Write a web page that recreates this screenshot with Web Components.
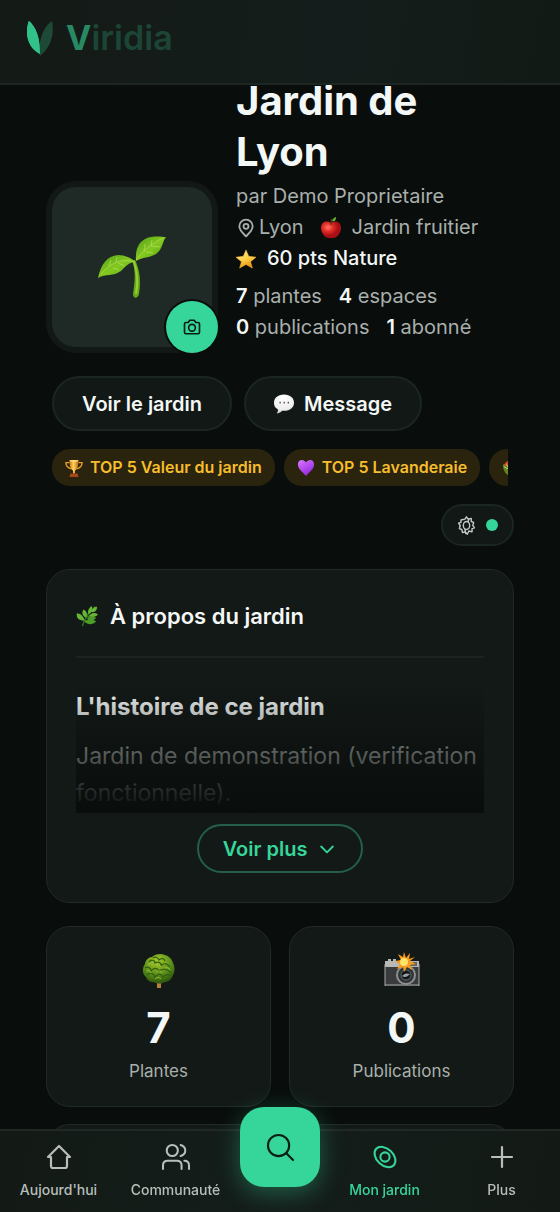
<!DOCTYPE html>
<html lang="fr">
<head>
<meta charset="utf-8">
<meta name="viewport" content="width=device-width, initial-scale=1">
<title>Viridia - Jardin de Lyon</title>
<style>
  :root {
    --bg: #090d0c;
    --surface: #131916;
    --line: #212a26;
    --text: #f3f7f5;
    --muted: #a9b0ac;
    --accent: #36d69b;
    --gold: #f6bd2c;
    --ink: #0b1e16;
  }
  body {
    margin: 0;
    background: var(--bg);
    color: var(--text);
    font-family: Inter, "Liberation Sans", sans-serif;
  }
</style>
</head>
<body>
<garden-app></garden-app>

<script>
const icons = {
  leaf: `<svg viewBox="0 0 28 36"><path d="M14 34C6 30 1 22 1 12 1 7 2 3 3 1c7 6 11 17 11 33Z" fill="#31c28a"/><path d="M14 36c-1-5-1-9 0-14C16 12 20 5 26 1c3 14-2 27-12 35Z" fill="#1d4936"/><path d="M14 34C6 30 1 22 1 12 1 7 2 3 3 1c7 6 11 17 11 33Z" fill="#31c28a"/></svg>`,
  sprout: `<svg viewBox="0 0 70 64"><defs><linearGradient id="a" x1="0" y1="0" x2="1" y2="1"><stop offset="0" stop-color="#4f9c18"/><stop offset=".5" stop-color="#83c91f"/><stop offset="1" stop-color="#4c9b12"/></linearGradient></defs><path d="M38 25c5 10 6 21 4 34-1 5-6 5-6 0 2-13 3-23-1-34Z" fill="#67aa19"/><path d="M37 27c4 12 4 21 2 32" fill="none" stroke="#94cf30" stroke-width="2"/><path d="M1 43C4 29 10 21 21 20c7 0 13 3 18 7-7 0-10 4-15 9-8 6-15 2-23 7Z" fill="url(#a)"/><path d="M39 26C38 12 43 4 54 2c7-1 11 0 15 0-4 5-3 12-10 17-7 4-13 3-20 7Z" fill="url(#a)"/><path d="M4 39c10-11 20-16 34-12M39 25C46 16 54 9 66 3M12 31l2-6m5 2 1-5m-4 11 6 2m-1-7 7 3M47 17l1-8m6 2 1-6m-6 12 7 1m-2-7 9 1" fill="none" stroke="#b1db58" stroke-width=".8"/></svg>`,
  camera: `<svg viewBox="0 0 24 24" class="stroke"><path d="M2 8c0-1 1-2 2-2h3l2-3h6l2 3h3c1 0 2 1 2 2v11c0 1-1 2-2 2H4c-1 0-2-1-2-2Z"/><circle cx="12" cy="13" r="4.500"/></svg>`,
  pin: `<svg viewBox="0 0 24 24" class="stroke"><path d="M20 10c0 5-5 9-8 12-3-3-8-7-8-12a8 8 0 0 1 16 0Z"/><circle cx="12" cy="10" r="3"/></svg>`,
  apple: `<svg viewBox="0 0 20 22"><defs><radialGradient id="a" cx=".35" cy=".35"><stop offset="0" stop-color="#ff7765"/><stop offset=".5" stop-color="#e52e28"/><stop offset="1" stop-color="#a90f14"/></radialGradient></defs><path d="M10 6c5-3 10-1 10 5 0 5-4 10-8 10H8c-4 0-8-5-8-10 0-6 5-8 10-5Z" fill="url(#a)"/><path d="M10 8c0-3 0-5 1-6" stroke="#633717" fill="none" stroke-width="1.500"/><path d="M11 4c1-3 3-4 4-4 0 3-1 5-4 4Z" fill="#60b52b"/></svg>`,
  star: `<svg viewBox="0 0 22 22"><defs><linearGradient id="a" x2=".4" y2="1"><stop stop-color="#fff0a0"/><stop offset=".6" stop-color="#ffcf45"/><stop offset="1" stop-color="#ed9515"/></linearGradient></defs><path d="m11 1 3 7 8 1-6 5 2 7-7-4-7 4 2-7-6-5 8-1Z" fill="url(#a)" stroke="#f6b936" stroke-width=".6" stroke-linejoin="round"/></svg>`,
  bubble: `<svg viewBox="0 0 22 21"><defs><radialGradient id="a" cx=".45" cy=".2" r=".9"><stop stop-color="#fff"/><stop offset=".65" stop-color="#eee"/><stop offset="1" stop-color="#bbb"/></radialGradient></defs><path d="M11 0c7 0 11 4 11 9s-4 9-11 9H9c-2 2-4 3-6 3 1-2 2-3 1-5-3-1-4-4-4-7 0-5 4-9 11-9Z" fill="url(#a)"/><path d="M6 9h1.500m3 0H12m3 0h1.500" stroke="#555" stroke-width="1.800"/></svg>`,
  trophy: `<svg viewBox="0 0 20 20"><defs><linearGradient id="a"><stop stop-color="#c87813"/><stop offset=".45" stop-color="#ffd45d"/><stop offset="1" stop-color="#b9640f"/></linearGradient></defs><path d="M5 4H1c0 4 2 6 6 7m8-7h4c0 4-2 6-6 7" fill="none" stroke="#e6a12c" stroke-width="1.500"/><path d="M5 1h10c0 7-1 10-4 12v3H9v-3C6 11 5 8 5 1Z" fill="url(#a)"/><path d="M6 16h8l1 4H5Z" fill="#a4471b"/><ellipse cx="10" cy="2" rx="5" ry="1" fill="#ffdc75"/></svg>`,
  heart: `<svg viewBox="0 0 20 20"><defs><linearGradient id="a" x2=".6" y2="1"><stop stop-color="#d97aff"/><stop offset="1" stop-color="#9426dd"/></linearGradient></defs><path d="M10 19C6 14 1 11 1 6c0-6 7-6 9-2 2-4 9-4 9 2 0 5-5 8-9 13Z" fill="url(#a)"/></svg>`,
  basket: `<svg viewBox="0 0 20 20"><path d="M1 6h18v6c0 4-4 7-8 7C5 19 1 13 1 6Z" fill="#67831f"/><path d="M2 7c2-5 8-7 14-5l-3 5Z" fill="#e04a32"/><path d="M2 8c3 3 7 4 11 2M5 6l6 10" stroke="#d7dc8d" fill="none"/></svg>`,
  gear: `<svg viewBox="0 0 24 24" class="stroke fine"><path d="m10 4 2-3 2 3 4-1v4l3 1-1 4 2 3-3 1v4l-4-1-2 4-3-3-3 1-1-4-3-1 1-4-2-3 3-1V5Z"/><ellipse cx="12" cy="12" rx="4" ry="5"/><path d="m10 17 1 5m3-15 1-3"/></svg>`,
  herb: `<svg viewBox="0 0 24 24"><path d="M7 23C9 14 15 8 21 2M9 17 3 10m8 4-2-7m3 5 4-7m-7 12h11m-8-4 8-2" stroke="#397925" stroke-width="1.500" fill="none"/><g fill="#65b735"><path d="M9 17C3 17 0 14 1 9c4 0 8 4 8 8ZM11 14C7 12 6 9 8 5c4 2 5 5 3 9Z"/><path d="M14 10c-2-3 0-7 3-9 2 4 0 7-3 9Zm3-2c0-4 3-6 6-6 0 4-2 6-6 6Zm-3 4c3-4 6-4 10-2-2 3-6 4-10 2Z"/><path d="M9 18c5-3 9-3 13 0-4 4-9 4-13 0Zm3-3c2-3 6-3 10-1-2 3-7 4-10 1Z" fill="#4b9f27"/></g></svg>`,
  chevron: `<svg viewBox="0 0 24 24" class="stroke"><path d="m5 9 7 7 7-7"/></svg>`,
  tree: `<svg viewBox="0 0 36 36"><defs><radialGradient id="a" cx=".45" cy=".25" r=".8"><stop stop-color="#a6c92c"/><stop offset=".6" stop-color="#568b18"/><stop offset="1" stop-color="#254a0b"/></radialGradient></defs><path d="M16 28h4v7h-4Z" fill="#b68137"/><path d="M11 4c3-3 9-4 13-2 4 1 7 4 8 8 2 3 2 9 0 12-1 4-4 7-8 7-3 2-8 2-11 0-4 1-7-2-8-5-4-3-4-9-1-13 0-3 3-7 7-7Z" fill="url(#a)"/><g fill="none" stroke="#315e10" stroke-width="1.200"><path d="M8 9c2-3 6-2 6 1 3-2 7 0 6 3 3-4 7-2 9 1M4 15c3-2 6 0 6 3 3-4 7-3 8 0 4-3 9-2 12 2M6 22c3-3 7-2 8 2 3-4 7-3 8 0 2-3 6-3 8-1M12 5c3-2 5 0 6 2 2-2 5-2 6 1"/></g><g fill="none" stroke="#a9c746" stroke-width=".8"><path d="M7 12c2-2 4-1 5 0m4 1c2-2 3-1 4 1M6 18c2-1 4 0 4 2m6-1c2-2 4-1 5 1m3-5c2-1 4 0 5 2M14 26c2-2 4-2 6 0"/></g></svg>`,
  flash: `<svg viewBox="0 0 36 36"><g transform="translate(0 3)"><path d="M1 9h34v21H1Z" fill="#393b3c"/><path d="M1 8V5h3V3h3v2h2V3h3v2h23v6H1Z" fill="#b8b9b4"/><path d="M26 6h7v4h-7Z" fill="#62615d"/><path d="M1 29h34M1 8v22M35 8v22" stroke="#aaa"/><circle cx="22" cy="19" r="10" fill="#8e9090"/><circle cx="22" cy="19" r="8" fill="#303436"/><circle cx="22" cy="19" r="5" fill="#111719" stroke="#61696d"/><path d="M18 20c3-3 5-3 8-2-3 3-5 4-8 2Z" fill="#98a1a5"/><path d="m20-4 2 6 4-5-1 6 6-2-5 4 6 3-6 1 2 5-5-3-3 5-1-5-6 2 3-5-5-3 6-1-3-6 5 3Z" fill="#f69b1d"/><circle cx="20" cy="6" r="4" fill="#ffe268"/></g></svg>`,
  home: `<svg viewBox="0 0 26 26" class="stroke"><path d="M2 13 13 2l11 11h-3v9c0 1-1 2-2 2H7c-1 0-2-1-2-2v-9Z"/></svg>`,
  people: `<svg viewBox="0 0 28 26" class="stroke"><circle cx="10" cy="6" r="6"/><path d="M0 26v-4c0-3 2-5 5-5h10c3 0 5 2 5 5v4M19 0c3 1 5 3 5 6s-2 5-5 6m4 5c3 0 5 2 5 5v4"/></svg>`,
  search: `<svg viewBox="0 0 28 28" class="stroke"><circle cx="12" cy="12" r="11"/><path d="m20 20 7 7"/></svg>`,
  seed: `<svg viewBox="0 0 26 26" class="stroke"><ellipse cx="13" cy="13" rx="13" ry="9" transform="rotate(43 13 13)"/><circle cx="13" cy="13" r="5"/></svg>`,
  plus: `<svg viewBox="0 0 26 26" class="stroke"><path d="M13 3v20M3 13h20"/></svg>`
};

class GardenIcon extends HTMLElement {
  constructor() {
    super();
    this.attachShadow({ mode: "open" });
  }
  connectedCallback() {
    this.shadowRoot.innerHTML = `
      <style>
        :host { display: block; flex: none; width: 20px; height: 20px; }
        svg { display: block; width: 100%; height: 100%; overflow: visible; }
        .stroke { fill: none; stroke: currentColor; stroke-width: 2.2; stroke-linecap: round; stroke-linejoin: round; }
        .fine { stroke-width: 1.8; }
      </style>
      ${icons[this.getAttribute("name")]}
    `;
    this.setAttribute("aria-hidden", "true");
  }
}
customElements.define("garden-icon", GardenIcon);

// Small helper: an element whose shadow root is a plain template
function define(name, html) {
  const template = document.createElement("template");
  template.innerHTML = html;
  customElements.define(name, class extends HTMLElement {
    constructor() {
      super();
      this.attachShadow({ mode: "open" });
      this.shadowRoot.appendChild(template.content.cloneNode(true));
    }
  });
}

define("garden-header", `
  <style>
    :host {
      display: block;
      box-sizing: border-box;
      height: 85px;
      padding: 18px 26px;
      background: linear-gradient(100deg, #141a16, #141d1b 60%, #111a14);
      border-bottom: 2px solid #1e2623;
    }
    a { display: inline-flex; align-items: center; gap: 12px; text-decoration: none; font-size: 34px; line-height: 40px; font-weight: 600; color: #1c4535; }
    b { font-weight: 700; color: #278a63; }
    garden-icon { width: 28px; height: 36px; }
  </style>
  <a href="#"><garden-icon name="leaf"></garden-icon><span><b>V</b>iridia</span></a>
`);

define("garden-hero", `
  <style>
    :host { display: block; padding: 0 6px; }
    .row { display: flex; align-items: flex-end; gap: 24px; }
    .avatar {
      position: relative;
      flex: none;
      display: grid;
      place-items: center;
      width: 160px;
      height: 160px;
      border-radius: 24px;
      background: #1f2a27;
      box-shadow: 0 0 0 6px #111816;
    }
    .avatar > garden-icon { width: 70px; height: 64px; }
    .avatar button {
      position: absolute;
      right: -6px;
      bottom: -6px;
      display: grid;
      place-items: center;
      width: 52px;
      height: 52px;
      padding: 0;
      border: 0;
      border-radius: 50%;
      background: var(--accent);
      box-shadow: 0 0 0 2px var(--bg);
      color: var(--ink);
    }
    .avatar button garden-icon { width: 18px; height: 18px; }
    .info { min-width: 0; padding-bottom: 4px; font-size: 20px; line-height: 31px; color: var(--muted); }
    h1 { margin: 0 0 4px; font-size: 40px; line-height: 51px; font-weight: 700; color: var(--text); }
    p { display: flex; align-items: center; margin: 0; white-space: nowrap; }
    .place { gap: 3px; }
    .place .kind { height: 22px; margin: 0 8px 0 14px; }
    .points { gap: 11px; margin-bottom: 7px; color: var(--text); font-weight: 500; }
    .counts { gap: 17px; }
    b { color: var(--text); font-weight: 600; }
    .actions { display: flex; gap: 12px; margin-top: 29px; }
    .actions button {
      display: flex;
      align-items: center;
      gap: 10px;
      height: 55px;
      padding: 0 28px;
      border: 2px solid #1b2521;
      border-radius: 28px;
      background: #111816;
      color: var(--text);
      font: 600 20px/24px Inter, "Liberation Sans", sans-serif;
    }
    .badges { display: flex; gap: 9px; margin: 18px 0 0; padding: 0; overflow: hidden; list-style: none; }
    .badges li {
      flex: none;
      display: flex;
      align-items: center;
      gap: 7px;
      padding: 0 13px;
      border-radius: 18px;
      background: #2a230d;
      color: var(--gold);
      font-size: 16px;
      line-height: 37px;
      font-weight: 600;
    }
    .badges garden-icon { width: 18px; height: 18px; }
  </style>
  <div class="row">
    <div class="avatar">
      <garden-icon name="sprout"></garden-icon>
      <button type="button" aria-label="Changer la photo"><garden-icon name="camera"></garden-icon></button>
    </div>
    <div class="info">
      <h1>Jardin de Lyon</h1>
      <p>par Demo Proprietaire</p>
      <p class="place"><garden-icon name="pin"></garden-icon>Lyon<garden-icon class="kind" name="apple"></garden-icon>Jardin fruitier</p>
      <p class="points"><garden-icon name="star"></garden-icon>60 pts Nature</p>
      <p class="counts"><span><b>7</b> plantes</span><span><b>4</b> espaces</span></p>
      <p class="counts"><span><b>0</b> publications</span><span><b>1</b> abonné</span></p>
    </div>
  </div>
  <div class="actions">
    <button type="button">Voir le jardin</button>
    <button type="button"><garden-icon name="bubble"></garden-icon>Message</button>
  </div>
  <ul class="badges">
    <li><garden-icon name="trophy"></garden-icon>TOP 5 Valeur du jardin</li>
    <li><garden-icon name="heart"></garden-icon>TOP 5 Lavanderaie</li>
    <li><garden-icon name="basket"></garden-icon></li>
  </ul>
`);

define("garden-settings", `
  <style>
    :host { display: flex; justify-content: flex-end; margin-top: 18px; }
    button {
      display: flex;
      align-items: center;
      gap: 10px;
      height: 42px;
      padding: 0 14px;
      border: 2px solid #1b2521;
      border-radius: 21px;
      background: #111816;
      color: #c3c9c6;
    }
    garden-icon { width: 19px; height: 19px; }
    i { width: 12px; height: 12px; border-radius: 50%; background: var(--accent); }
  </style>
  <button type="button" aria-label="Réglages"><garden-icon name="gear"></garden-icon><i></i></button>
`);

define("garden-about", `
  <style>
    :host {
      display: block;
      margin-top: 23px;
      padding: 29px;
      border: 1px solid var(--line);
      border-radius: 24px;
      background: var(--surface);
    }
    h2 {
      display: flex;
      align-items: center;
      gap: 12px;
      margin: 0 0 24px;
      padding-bottom: 23px;
      border-bottom: 2px solid #1b2420;
      font-size: 22px;
      line-height: 34px;
      font-weight: 600;
    }
    h2 garden-icon { width: 22px; height: 22px; }
    .story { position: relative; height: 131px; overflow: hidden; }
    .story::after {
      content: "";
      position: absolute;
      inset: 0;
      background: linear-gradient(rgba(9, 13, 12, 0), var(--bg));
    }
    h3 { margin: 8px 0 14px; font-size: 24px; line-height: 34px; font-weight: 700; }
    p { margin: 0; font-size: 23px; line-height: 37px; color: #b8beba; }
    button {
      display: flex;
      align-items: center;
      gap: 10px;
      height: 49px;
      margin: 11px auto 0;
      padding: 0 24px;
      border: 2px solid #245f49;
      border-radius: 25px;
      background: none;
      color: var(--accent);
      font: 600 20px/24px Inter, "Liberation Sans", sans-serif;
    }
  </style>
  <h2><garden-icon name="herb"></garden-icon>À propos du jardin</h2>
  <div class="story">
    <h3>L'histoire de ce jardin</h3>
    <p>Jardin de demonstration (verification fonctionnelle).</p>
  </div>
  <button type="button">Voir plus<garden-icon name="chevron"></garden-icon></button>
`);

define("garden-stat", `
  <style>
    :host {
      display: flex;
      flex-direction: column;
      align-items: center;
      box-sizing: border-box;
      min-height: 181px;
      padding: 26px 16px 20px;
      border: 1px solid var(--line);
      border-radius: 24px;
      background: var(--surface);
    }
    b { margin-top: 14px; font-size: 42px; line-height: 50px; font-weight: 700; }
    span { margin-top: 6px; font-size: 17px; line-height: 24px; color: var(--muted); }
    ::slotted(garden-icon) { width: 36px; height: 36px; }
  </style>
  <slot name="icon"></slot>
  <b><slot name="value"></slot></b>
  <span><slot></slot></span>
`);

define("garden-tab", `
  <style>
    :host { display: block; }
    a {
      display: flex;
      flex-direction: column;
      align-items: center;
      gap: 10px;
      color: #b8beba;
      text-decoration: none;
      font-size: 14px;
      line-height: 20px;
      font-weight: 500;
    }
    :host([active]) a { color: var(--accent); }
    ::slotted(garden-icon) { width: 26px; height: 26px; }
    ::slotted([name="seed"]) { width: 24px; }
  </style>
  <a href="#"><slot name="icon"></slot><span><slot></slot></span></a>
`);

define("garden-nav", `
  <style>
    :host {
      display: grid;
      grid-template-columns: 1fr 1fr 92px 1fr 1fr;
      box-sizing: border-box;
      height: 83px;
      padding-top: 13px;
      border-top: 2px solid #202925;
      background: linear-gradient(100deg, #131a16, #141d1a 50%, #131a16);
    }
    button {
      display: grid;
      place-items: center;
      justify-self: center;
      width: 80px;
      height: 80px;
      margin-top: -37px;
      padding: 0;
      border: 0;
      border-radius: 24px;
      background: var(--accent);
      box-shadow: 0 6px 24px rgba(54, 214, 155, .35);
      color: var(--ink);
    }
    button garden-icon { width: 27px; height: 27px; }
  </style>
  <garden-tab><garden-icon slot="icon" name="home"></garden-icon>Aujourd'hui</garden-tab>
  <garden-tab><garden-icon slot="icon" name="people"></garden-icon>Communauté</garden-tab>
  <button type="button" aria-label="Rechercher"><garden-icon name="search"></garden-icon></button>
  <garden-tab active><garden-icon slot="icon" name="seed"></garden-icon>Mon jardin</garden-tab>
  <garden-tab><garden-icon slot="icon" name="plus"></garden-icon>Plus</garden-tab>
`);

define("garden-app", `
  <style>
    :host { display: block; height: 100vh; overflow: hidden; }
    garden-header { position: fixed; top: 0; left: 0; right: 0; z-index: 2; }
    garden-nav { position: fixed; bottom: 0; left: 0; right: 0; z-index: 2; }
    main {
      box-sizing: border-box;
      height: 100%;
      padding: 75px 46px 83px;
      overflow-y: auto;
      scrollbar-width: none;
    }
    .stats { display: grid; grid-template-columns: 1fr 1fr; gap: 17px 18px; margin-top: 23px; }
    .wide { grid-column: 1 / -1; }
  </style>
  <garden-header></garden-header>
  <main>
    <garden-hero></garden-hero>
    <garden-settings></garden-settings>
    <garden-about></garden-about>
    <div class="stats">
      <garden-stat><garden-icon slot="icon" name="tree"></garden-icon><span slot="value">7</span>Plantes</garden-stat>
      <garden-stat><garden-icon slot="icon" name="flash"></garden-icon><span slot="value">0</span>Publications</garden-stat>
      <garden-stat class="wide"></garden-stat>
    </div>
  </main>
  <garden-nav></garden-nav>
`);
</script>
</body>
</html>
